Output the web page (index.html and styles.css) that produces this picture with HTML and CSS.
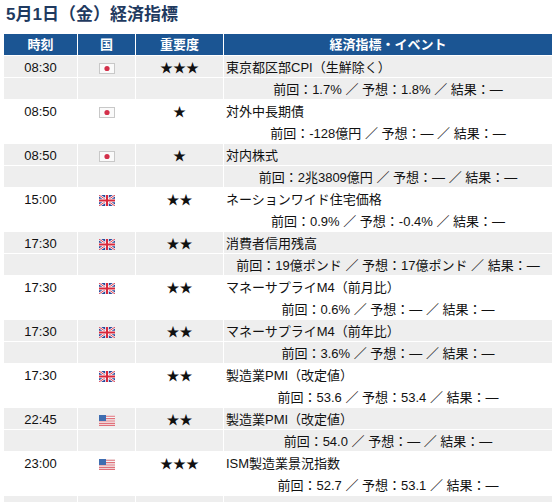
FILE: index.html
```html
<!DOCTYPE html>
<html lang="ja">
<head>
<meta charset="utf-8">
<title>5月1日（金）経済指標</title>
<link rel="stylesheet" href="styles.css">
</head>
<body>
<h1 class="title">5月1日（金）経済指標</h1>
<table class="cal">
  <colgroup>
    <col class="c-time"><col class="c-flag"><col class="c-imp"><col class="c-ev">
  </colgroup>
  <thead>
    <tr><th>時刻</th><th>国</th><th>重要度</th><th>経済指標・イベント</th></tr>
  </thead>
  <tbody class="odd">
    <tr><td class="time">08:30</td><td class="flag"><svg class="fl" viewBox="0 0 16 11"><rect x="0.5" y="0.5" width="15" height="10" fill="#fafafa" stroke="#c8c8c8"/><circle cx="8" cy="5.5" r="2.6" fill="#d3304a"/></svg></td><td class="imp">★★★</td><td class="name">東京都区部CPI（生鮮除く）</td></tr>
    <tr><td></td><td></td><td></td><td class="detail">前回：1.7% ／ 予想：1.8% ／ 結果：—</td></tr>
  </tbody>
  <tbody class="even">
    <tr><td class="time">08:50</td><td class="flag"><svg class="fl" viewBox="0 0 16 11"><rect x="0.5" y="0.5" width="15" height="10" fill="#fafafa" stroke="#c8c8c8"/><circle cx="8" cy="5.5" r="2.6" fill="#d3304a"/></svg></td><td class="imp">★</td><td class="name">対外中長期債</td></tr>
    <tr><td></td><td></td><td></td><td class="detail">前回：-128億円 ／ 予想：— ／ 結果：—</td></tr>
  </tbody>
  <tbody class="odd">
    <tr><td class="time">08:50</td><td class="flag"><svg class="fl" viewBox="0 0 16 11"><rect x="0.5" y="0.5" width="15" height="10" fill="#fafafa" stroke="#c8c8c8"/><circle cx="8" cy="5.5" r="2.6" fill="#d3304a"/></svg></td><td class="imp">★</td><td class="name">対内株式</td></tr>
    <tr><td></td><td></td><td></td><td class="detail">前回：2兆3809億円 ／ 予想：— ／ 結果：—</td></tr>
  </tbody>
  <tbody class="even">
    <tr><td class="time">15:00</td><td class="flag"><svg class="fl" viewBox="0 0 16 11"><rect width="16" height="11" fill="#2a4a9a"/><path d="M0 0L16 11M16 0L0 11" stroke="#fff" stroke-width="2.4"/><path d="M0 0L16 11M16 0L0 11" stroke="#d8283c" stroke-width="0.9"/><path d="M8 0V11M0 5.5H16" stroke="#fff" stroke-width="3.6"/><path d="M8 0V11M0 5.5H16" stroke="#d8283c" stroke-width="2"/></svg></td><td class="imp">★★</td><td class="name">ネーションワイド住宅価格</td></tr>
    <tr><td></td><td></td><td></td><td class="detail">前回：0.9% ／ 予想：-0.4% ／ 結果：—</td></tr>
  </tbody>
  <tbody class="odd">
    <tr><td class="time">17:30</td><td class="flag"><svg class="fl" viewBox="0 0 16 11"><rect width="16" height="11" fill="#2a4a9a"/><path d="M0 0L16 11M16 0L0 11" stroke="#fff" stroke-width="2.4"/><path d="M0 0L16 11M16 0L0 11" stroke="#d8283c" stroke-width="0.9"/><path d="M8 0V11M0 5.5H16" stroke="#fff" stroke-width="3.6"/><path d="M8 0V11M0 5.5H16" stroke="#d8283c" stroke-width="2"/></svg></td><td class="imp">★★</td><td class="name">消費者信用残高</td></tr>
    <tr><td></td><td></td><td></td><td class="detail">前回：19億ポンド ／ 予想：17億ポンド ／ 結果：—</td></tr>
  </tbody>
  <tbody class="even">
    <tr><td class="time">17:30</td><td class="flag"><svg class="fl" viewBox="0 0 16 11"><rect width="16" height="11" fill="#2a4a9a"/><path d="M0 0L16 11M16 0L0 11" stroke="#fff" stroke-width="2.4"/><path d="M0 0L16 11M16 0L0 11" stroke="#d8283c" stroke-width="0.9"/><path d="M8 0V11M0 5.5H16" stroke="#fff" stroke-width="3.6"/><path d="M8 0V11M0 5.5H16" stroke="#d8283c" stroke-width="2"/></svg></td><td class="imp">★★</td><td class="name">マネーサプライM4（前月比）</td></tr>
    <tr><td></td><td></td><td></td><td class="detail">前回：0.6% ／ 予想：— ／ 結果：—</td></tr>
  </tbody>
  <tbody class="odd">
    <tr><td class="time">17:30</td><td class="flag"><svg class="fl" viewBox="0 0 16 11"><rect width="16" height="11" fill="#2a4a9a"/><path d="M0 0L16 11M16 0L0 11" stroke="#fff" stroke-width="2.4"/><path d="M0 0L16 11M16 0L0 11" stroke="#d8283c" stroke-width="0.9"/><path d="M8 0V11M0 5.5H16" stroke="#fff" stroke-width="3.6"/><path d="M8 0V11M0 5.5H16" stroke="#d8283c" stroke-width="2"/></svg></td><td class="imp">★★</td><td class="name">マネーサプライM4（前年比）</td></tr>
    <tr><td></td><td></td><td></td><td class="detail">前回：3.6% ／ 予想：— ／ 結果：—</td></tr>
  </tbody>
  <tbody class="even">
    <tr><td class="time">17:30</td><td class="flag"><svg class="fl" viewBox="0 0 16 11"><rect width="16" height="11" fill="#2a4a9a"/><path d="M0 0L16 11M16 0L0 11" stroke="#fff" stroke-width="2.4"/><path d="M0 0L16 11M16 0L0 11" stroke="#d8283c" stroke-width="0.9"/><path d="M8 0V11M0 5.5H16" stroke="#fff" stroke-width="3.6"/><path d="M8 0V11M0 5.5H16" stroke="#d8283c" stroke-width="2"/></svg></td><td class="imp">★★</td><td class="name">製造業PMI（改定値）</td></tr>
    <tr><td></td><td></td><td></td><td class="detail">前回：53.6 ／ 予想：53.4 ／ 結果：—</td></tr>
  </tbody>
  <tbody class="odd">
    <tr><td class="time">22:45</td><td class="flag"><svg class="fl" viewBox="0 0 16 11"><rect width="16" height="11" fill="#f4f4f4"/><path d="M0 1.2H16M0 3.6H16M0 6H16M0 8.4H16M0 10.4H16" stroke="#e0707a" stroke-width="1.1"/><rect width="7" height="6" fill="#3f6db0"/></svg></td><td class="imp">★★</td><td class="name">製造業PMI（改定値）</td></tr>
    <tr><td></td><td></td><td></td><td class="detail">前回：54.0 ／ 予想：— ／ 結果：—</td></tr>
  </tbody>
  <tbody class="even">
    <tr><td class="time">23:00</td><td class="flag"><svg class="fl" viewBox="0 0 16 11"><rect width="16" height="11" fill="#f4f4f4"/><path d="M0 1.2H16M0 3.6H16M0 6H16M0 8.4H16M0 10.4H16" stroke="#e0707a" stroke-width="1.1"/><rect width="7" height="6" fill="#3f6db0"/></svg></td><td class="imp">★★★</td><td class="name">ISM製造業景況指数</td></tr>
    <tr><td></td><td></td><td></td><td class="detail">前回：52.7 ／ 予想：53.1 ／ 結果：—</td></tr>
  </tbody>
  <tbody class="odd">
    <tr><td class="time"></td><td class="flag"></td><td class="imp"></td><td class="name"></td></tr>
    <tr><td></td><td></td><td></td><td class="detail"></td></tr>
  </tbody>
</table>
</body>
</html>
```

FILE: styles.css
```css
html, body {
  margin: 0;
  padding: 0;
  background: #ffffff;
}
body {
  padding: 0 3px;
  font-family: "Liberation Sans", "Noto Sans CJK JP", sans-serif;
  font-size: 13px;
  color: #111;
}
.title {
  margin: 0;
  padding: 5px 0 0 3px;
  height: 33px;
  box-sizing: border-box;
  font-size: 17px;
  line-height: 20px;
  font-weight: bold;
  color: #1f3a60;
}
.cal {
  width: 550px;
  table-layout: fixed;
  border-collapse: separate;
  border-spacing: 1px;
}
.c-time { width: 73px; }
.c-flag { width: 57px; }
.c-imp { width: 87px; }
.cal th {
  height: 21px;
  padding: 0;
  background: #1b5593;
  color: #fff;
  font-weight: bold;
  font-size: 13px;
  line-height: 21px;
  text-align: center;
}
.cal td {
  height: 21px;
  box-sizing: border-box;
  padding: 2px 0 0;
  line-height: 19px;
  white-space: nowrap;
  overflow: visible;
}
.odd td { background: #eeeeee; }
.even td { background: #ffffff; }
.time, .imp, .flag { text-align: center; }
.imp { font-size: 13px; }
.fl {
  width: 16px;
  height: 11px;
  display: inline-block;
  vertical-align: -2px;
}
.cal td.name {
  padding-left: 2px;
  text-align: left;
}
.detail {
  text-align: center;
}
```
